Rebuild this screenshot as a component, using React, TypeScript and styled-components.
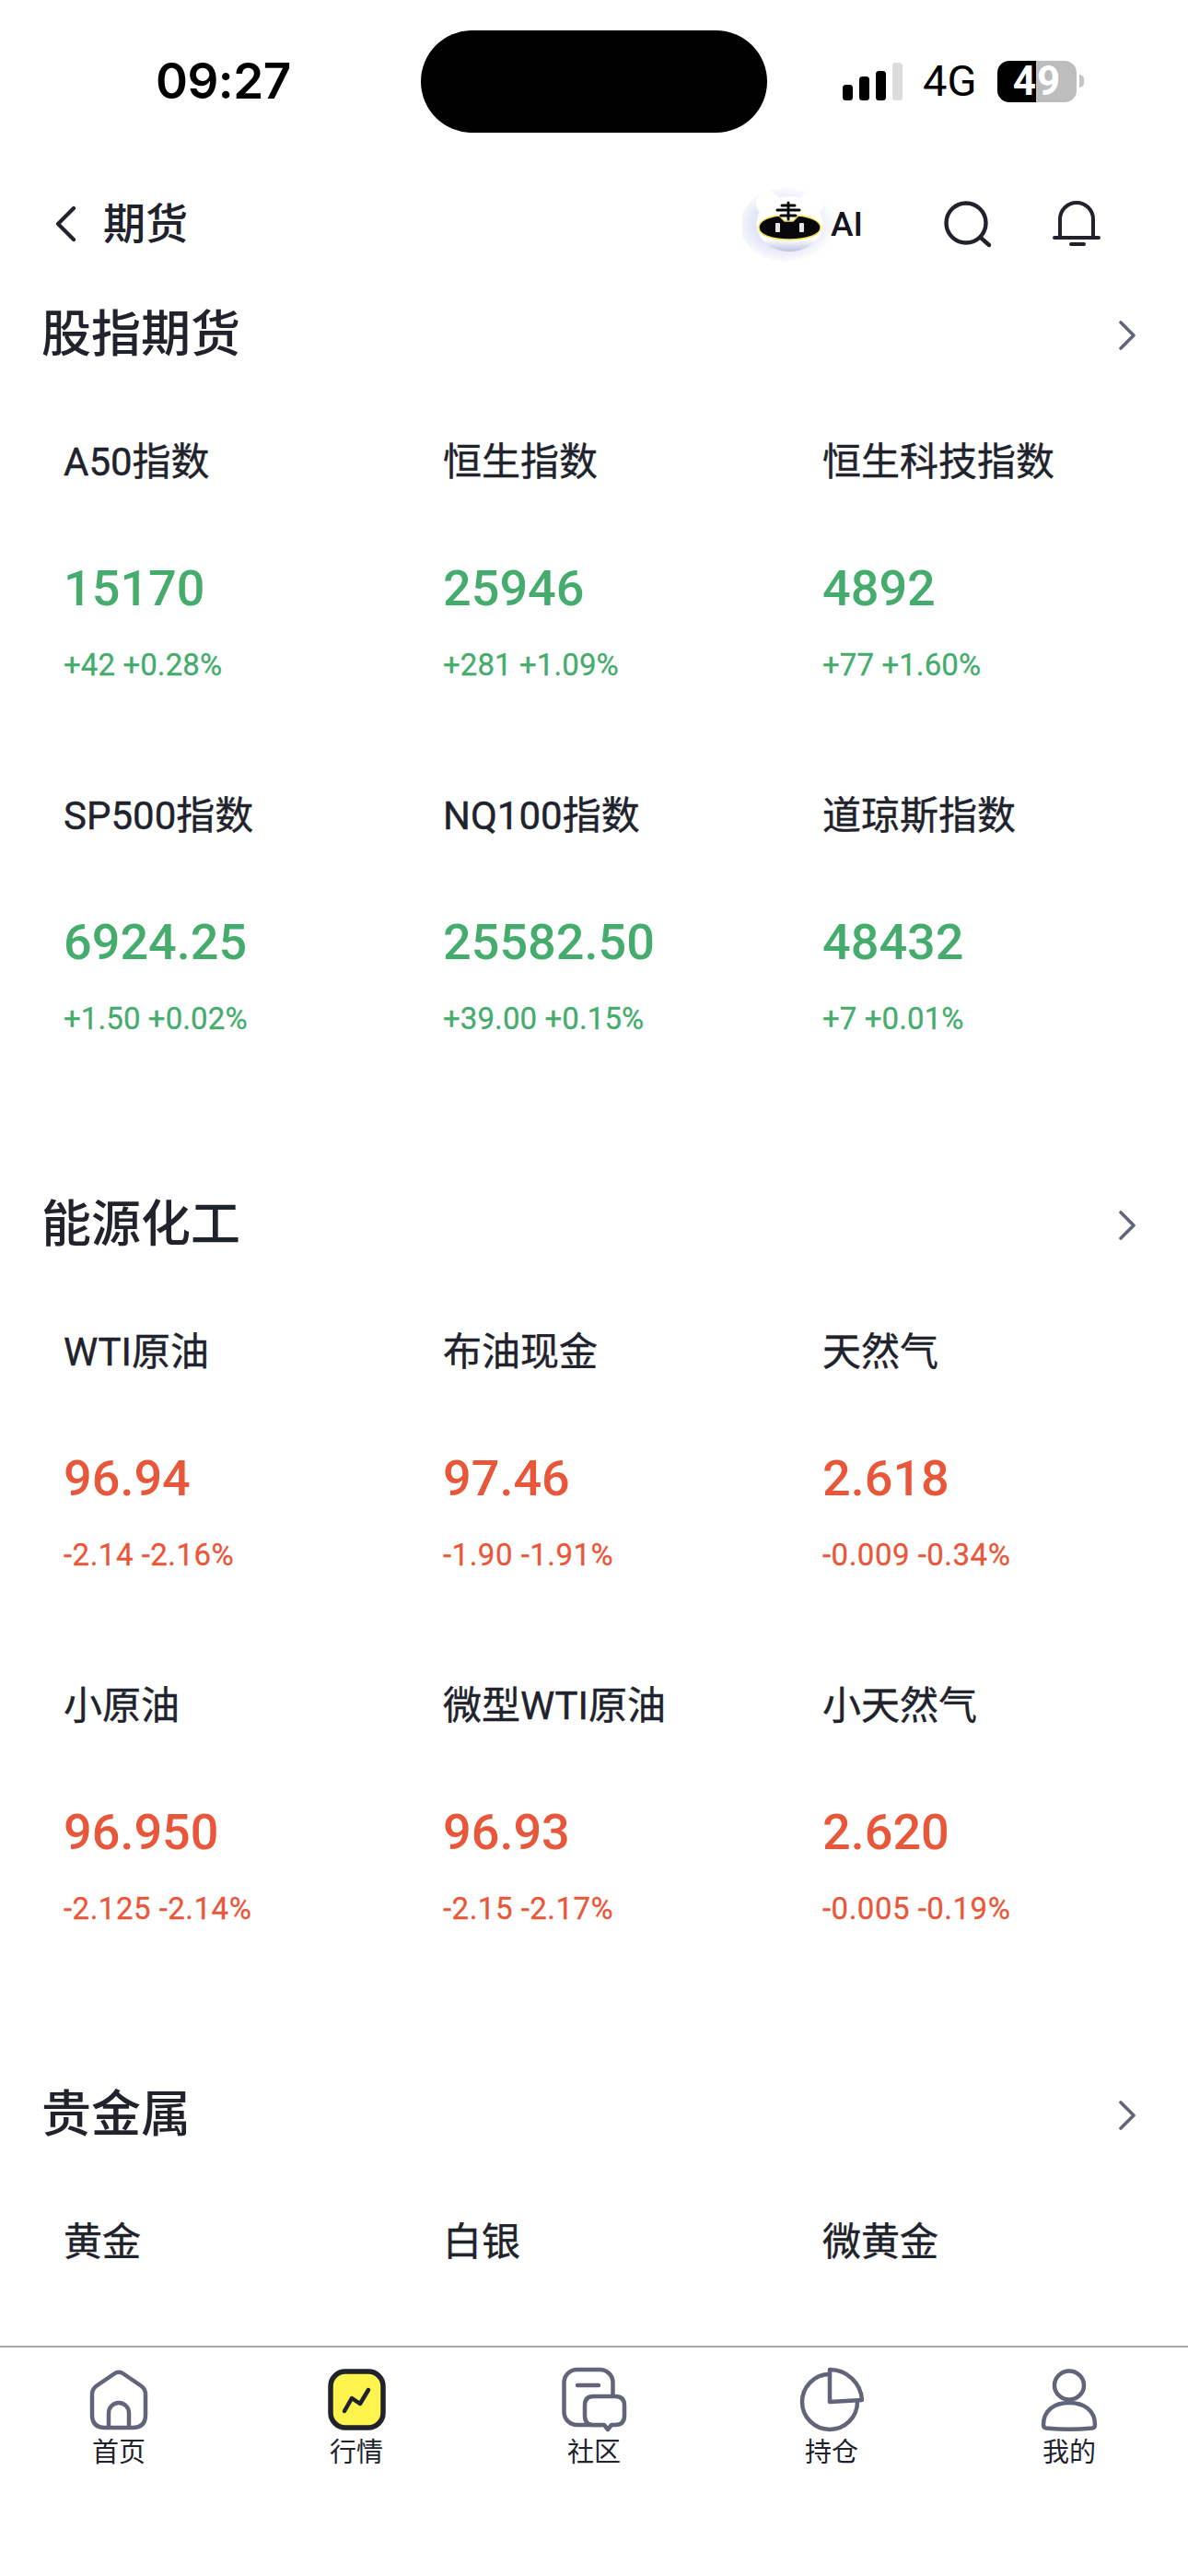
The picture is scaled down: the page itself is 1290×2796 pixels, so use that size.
import React from "react";
import styled, { createGlobalStyle } from "styled-components";

const GlobalStyle = createGlobalStyle`
  html, body {
    margin: 0;
    padding: 0;
    background: #fff;
  }
  * {
    box-sizing: border-box;
  }
`;

const CJK = `Roboto, "Noto Sans CJK SC", sans-serif`;

const Page = styled.div`
  width: 1290px;
  height: 2796px;
  display: flex;
  flex-direction: column;
  background: #fff;
  font-family: ${CJK};
  color: #20222c;
  overflow: hidden;
`;

const StatusBar = styled.div`
  height: 176px;
  flex: none;
  display: flex;
  align-items: center;
  padding-left: 169px;
`;

const Clock = styled.div`
  width: 288px;
  font-family: Inter, sans-serif;
  font-size: 53px;
  font-weight: 600;
  color: #000;
  letter-spacing: -0.5px;
`;

const Island = styled.div`
  width: 376px;
  height: 111px;
  border-radius: 56px;
  background: #000;
`;

const SignalIcon = styled.svg`
  margin-left: 82px;
  flex: none;
`;

const Network = styled.div`
  margin-left: 22px;
  width: 81px;
  font-size: 47px;
  font-weight: 400;
  color: #000;
  line-height: 46px;
`;

const Battery = styled.div`
  width: 86px;
  height: 45px;
  border-radius: 13px;
  background: linear-gradient(90deg, #000 49%, #bdbdbd 49%);
  color: #fff;
  font-size: 44px;
  font-weight: 700;
  line-height: 45px;
  text-align: center;
  letter-spacing: 1px;
`;

const BatteryTip = styled.div`
  width: 5px;
  height: 14px;
  margin-left: 3px;
  border-radius: 0 7px 7px 0;
  background: #c4c4c4;
`;

const NavBar = styled.div`
  height: 134px;
  flex: none;
  display: flex;
  align-items: center;
  padding-left: 59px;
`;

const NavTitle = styled.div`
  margin-left: 28px;
  width: 694px;
  font-size: 46px;
  font-weight: 500;
  line-height: 60px;
`;

const Mascot = styled.svg`
  flex: none;
  margin-right: -19px;
`;

const AiLabel = styled.div`
  position: relative;
  width: 122px;
  font-size: 37px;
  font-weight: 500;
  color: #15161c;
`;

const NavIcon = styled.svg<{ $gap?: number }>`
  flex: none;
  margin-right: ${(p) => p.$gap ?? 0}px;
`;

const Content = styled.div`
  flex: 1;
  min-height: 0;
  overflow: hidden;
`;

const Section = styled.section`
  padding: 0 8px 0 46px;
  margin-bottom: 94px;
`;

const SectionHeader = styled.div`
  height: 104px;
  display: flex;
  align-items: center;
  justify-content: space-between;
  padding: 3px 47px 0 0;
`;

const SectionTitle = styled.h2`
  margin: 0 0 0 -1px;
  font-size: 54px;
  font-weight: 500;
  line-height: 70px;
`;

const Grid = styled.div`
  display: grid;
  grid-template-columns: repeat(3, 412px);
`;

const Quote = styled.div`
  height: 384px;
  padding: 58px 0 0 23px;
`;

const QuoteName = styled.div`
  font-size: 42px;
  font-weight: 400;
  line-height: 60px;
  white-space: nowrap;
  -webkit-text-stroke: 0.4px #20222c;
`;

const QuotePrice = styled.div<{ $up: boolean }>`
  margin-top: 72px;
  font-size: 54px;
  font-weight: 500;
  line-height: 70px;
  color: ${(p) => (p.$up ? "#45ac6d" : "#e9573a")};
`;

const QuoteChange = styled.div<{ $up: boolean }>`
  margin-top: 26px;
  font-size: 33px;
  font-weight: 400;
  line-height: 44px;
  letter-spacing: ${(p) => (p.$up ? "0.1px" : "0.5px")};
  color: ${(p) => (p.$up ? "#45ac6d" : "#e9573a")};
  -webkit-text-stroke: 0.3px ${(p) => (p.$up ? "#45ac6d" : "#e9573a")};
`;

const TabBar = styled.nav`
  height: 250px;
  flex: none;
  display: grid;
  grid-template-columns: repeat(5, 258px);
  border-top: 2px solid #a8a8a8;
  padding-top: 21px;
  background: #fff;
`;

const Tab = styled.div`
  display: flex;
  flex-direction: column;
  align-items: center;
`;

const TabIcon = styled.svg`
  display: block;
  overflow: visible;
`;

const TabLabel = styled.div`
  margin-top: 3px;
  font-size: 29px;
  font-weight: 400;
  line-height: 40px;
`;

type QuoteData = { name: string; price?: string; change?: string };

const sections: { title: string; up: boolean; quotes: QuoteData[] }[] = [
  {
    title: "股指期货",
    up: true,
    quotes: [
      { name: "A50指数", price: "15170", change: "+42 +0.28%" },
      { name: "恒生指数", price: "25946", change: "+281 +1.09%" },
      { name: "恒生科技指数", price: "4892", change: "+77 +1.60%" },
      { name: "SP500指数", price: "6924.25", change: "+1.50 +0.02%" },
      { name: "NQ100指数", price: "25582.50", change: "+39.00 +0.15%" },
      { name: "道琼斯指数", price: "48432", change: "+7 +0.01%" },
    ],
  },
  {
    title: "能源化工",
    up: false,
    quotes: [
      { name: "WTI原油", price: "96.94", change: "-2.14 -2.16%" },
      { name: "布油现金", price: "97.46", change: "-1.90 -1.91%" },
      { name: "天然气", price: "2.618", change: "-0.009 -0.34%" },
      { name: "小原油", price: "96.950", change: "-2.125 -2.14%" },
      { name: "微型WTI原油", price: "96.93", change: "-2.15 -2.17%" },
      { name: "小天然气", price: "2.620", change: "-0.005 -0.19%" },
    ],
  },
  {
    title: "贵金属",
    up: true,
    quotes: [{ name: "黄金" }, { name: "白银" }, { name: "微黄金" }],
  },
];

const GREY = "#62657a";
const DARK = "#20222c";

const HomeIcon = () => (
  <TabIcon width="70" height="70" viewBox="0 0 70 70" fill="none" stroke={GREY} strokeWidth="4.5" strokeLinecap="round" strokeLinejoin="round">
    <path d="M30 7.5Q35 4 40 7.5L59 20.5Q64 24 64 30V52Q64 66 50 66H20Q6 66 6 52V30Q6 24 11 20.5Z" />
    <path d="M24 65V50a11 11 0 0 1 22 0V65" />
  </TabIcon>
);

const MarketIcon = () => (
  <TabIcon width="70" height="70" viewBox="0 0 70 70" fill="none" strokeLinecap="round" strokeLinejoin="round">
    <rect x="7" y="5" width="57" height="61" rx="16" fill="#fff34d" stroke={DARK} strokeWidth="5.5" />
    <path d="M22 48L30 34L39 40L48 25" stroke={DARK} strokeWidth="4.5" />
  </TabIcon>
);

const CommunityIcon = () => (
  <TabIcon width="70" height="70" viewBox="0 0 70 70" fill="none" stroke={GREY} strokeWidth="4.5" strokeLinecap="round" strokeLinejoin="round">
    <rect x="2.5" y="3" width="53" height="60" rx="14" />
    <path d="M17 20H40" />
    <path
      fill="#fff"
      d="M34 32H58Q68 32 68 42V53Q68 63 58 63H54L50 68L46 63H34Q25 63 25 53V42Q25 32 34 32Z"
    />
  </TabIcon>
);

const HoldingIcon = () => (
  <TabIcon width="70" height="70" viewBox="0 0 70 70" fill="none" stroke={GREY} strokeWidth="4.5" strokeLinecap="round" strokeLinejoin="round">
    <path d="M33 8A30 30 0 1 0 63 38" />
    <path d="M33 38V3A35 35 0 0 1 68 36Z" />
  </TabIcon>
);

const MineIcon = () => (
  <TabIcon width="70" height="70" viewBox="0 0 70 70" fill="none" stroke={GREY} strokeWidth="4.5" strokeLinecap="round" strokeLinejoin="round">
    <ellipse cx="35" cy="20" rx="16" ry="15.5" />
    <path d="M7 63C7 47 19 39 35 39C51 39 63 47 63 63Q63 66 60 66.5Q35 69 10 66.5Q7 66 7 63Z" />
  </TabIcon>
);

const tabs = [
  { label: "首页", icon: <HomeIcon /> },
  { label: "行情", icon: <MarketIcon /> },
  { label: "社区", icon: <CommunityIcon /> },
  { label: "持仓", icon: <HoldingIcon /> },
  { label: "我的", icon: <MineIcon /> },
];

const MascotArt = () => (
  <Mascot width="115" height="85" viewBox="0 0 115 85">
    <defs>
      <radialGradient id="glow" cx="42%" cy="50%" r="50%">
        <stop offset="0%" stopColor="#cfd4f0" />
        <stop offset="65%" stopColor="#e6e9f8" />
        <stop offset="100%" stopColor="#ffffff" />
      </radialGradient>
      <linearGradient id="shell" x1="0" y1="0" x2="0" y2="1">
        <stop offset="0%" stopColor="#ffffff" />
        <stop offset="78%" stopColor="#ffffff" />
        <stop offset="100%" stopColor="#bcc0e2" />
      </linearGradient>
    </defs>
    <ellipse cx="54" cy="43" rx="56" ry="42" fill="url(#glow)" />
    <circle cx="28" cy="20" r="13" fill="#fff" />
    <circle cx="75" cy="20" r="13" fill="#fff" />
    <ellipse cx="51.5" cy="42" rx="36" ry="30" fill="url(#shell)" />
    <path d="M18 46C18 38 30 34 40 33L46 39H55L61 33C72 34 85 38 85 46C85 54 70 59 51 59C32 59 18 54 18 46Z" fill="#08080a" stroke="#f2e34a" strokeWidth="1.5" />
    <path d="M50 19V37M43 22H57M38 27H62M42 33H58" stroke="#08080a" strokeWidth="3" fill="none" strokeLinecap="round" />
    <rect x="36" y="41" width="5" height="10" rx="1" fill="#e6e6e6" />
    <rect x="62" y="41" width="5" height="10" rx="1" fill="#e6e6e6" />
  </Mascot>
);

const Chevron = () => (
  <svg width="22" height="36" viewBox="0 0 22 36" fill="none" stroke={GREY} strokeWidth="3.6" strokeLinecap="round" strokeLinejoin="round">
    <path d="M4 4L18 18L4 32" />
  </svg>
);

const App: React.FC = () => {
  return (
    <Page>
      <GlobalStyle />
      <StatusBar>
        <Clock>09:27</Clock>
        <Island />
        <SignalIcon width="65" height="41" viewBox="0 0 65 41">
          <rect x="0" y="24" width="11" height="17" rx="3.5" fill="#000" />
          <rect x="18" y="15" width="11" height="26" rx="3.5" fill="#000" />
          <rect x="36" y="9" width="11" height="32" rx="3.5" fill="#000" />
          <rect x="54" y="0" width="11" height="41" rx="3.5" fill="#dcdcdc" />
        </SignalIcon>
        <Network>4G</Network>
        <Battery>49</Battery>
        <BatteryTip />
      </StatusBar>

      <NavBar>
        <svg width="25" height="40" viewBox="0 0 25 40" fill="none" stroke={DARK} strokeWidth="4.2" strokeLinecap="round" strokeLinejoin="round">
          <path d="M21 3L4 20L21 37" />
        </svg>
        <NavTitle>期货</NavTitle>
        <MascotArt />
        <AiLabel>AI</AiLabel>
        <NavIcon $gap={65} width="54" height="54" viewBox="0 0 54 54" fill="none" stroke={DARK} strokeWidth="4.4" strokeLinecap="round">
          <circle cx="25" cy="26" r="21.5" />
          <path d="M41 42L50 50" />
        </NavIcon>
        <NavIcon width="52" height="52" viewBox="0 0 52 52" fill="none" stroke={DARK} strokeWidth="4" strokeLinecap="round" strokeLinejoin="round">
          <path d="M8 41V21a18 18 0 0 1 36 0V41" />
          <path d="M2 41H50" />
          <path d="M20 48H34" />
        </NavIcon>
      </NavBar>

      <Content>
        {sections.map((section) => (
          <Section key={section.title}>
            <SectionHeader>
              <SectionTitle>{section.title}</SectionTitle>
              <Chevron />
            </SectionHeader>
            <Grid>
              {section.quotes.map((q) => (
                <Quote key={q.name}>
                  <QuoteName>{q.name}</QuoteName>
                  {q.price && <QuotePrice $up={section.up}>{q.price}</QuotePrice>}
                  {q.change && <QuoteChange $up={section.up}>{q.change}</QuoteChange>}
                </Quote>
              ))}
            </Grid>
          </Section>
        ))}
      </Content>

      <TabBar>
        {tabs.map((tab) => (
          <Tab key={tab.label}>
            {tab.icon}
            <TabLabel>{tab.label}</TabLabel>
          </Tab>
        ))}
      </TabBar>
    </Page>
  );
};

export default App;
